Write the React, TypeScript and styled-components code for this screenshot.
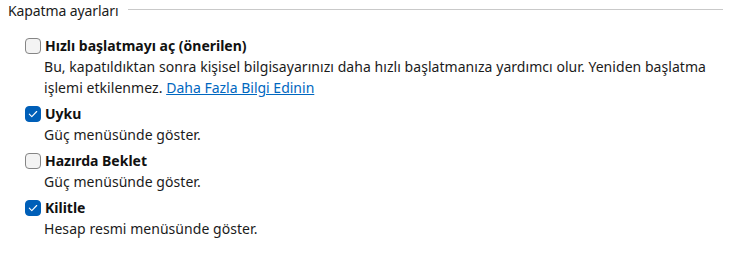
import React from "react";
import styled, { createGlobalStyle } from "styled-components";

const Global = createGlobalStyle`
  html, body { margin: 0; padding: 0; background: #ffffff; }
  body { font-family: "Noto Sans", "Open Sans", sans-serif; color: #1b1b1b; }
`;

const Section = styled.section`
  width: 734px;
  padding: 0 11px 0 8px;
  box-sizing: border-box;
`;

const Header = styled.div`
  display: flex;
  align-items: center;
  gap: 9px;
  height: 22px;
`;

const Title = styled.h2`
  margin: 0;
  font-size: 14px;
  font-weight: 400;
  line-height: 22px;
  white-space: nowrap;
  color: #1b1b1b;
  letter-spacing: -0.1px;
`;

const Rule = styled.div`
  flex: 1;
  height: 1px;
  background: #c9c9c9;
  margin-top: -3px;
`;

const List = styled.div`
  display: flex;
  flex-direction: column;
  gap: 8px;
  padding: 16px 0 0 17px;
`;

const Option = styled.div`
  display: flex;
  flex-direction: column;
`;

const Row = styled.label`
  display: flex;
  align-items: center;
  gap: 4px;
  height: 16px;
`;

const Box = styled.span<{ $checked: boolean }>`
  width: 16px;
  height: 16px;
  box-sizing: border-box;
  border-radius: 4px;
  display: inline-flex;
  align-items: center;
  justify-content: center;
  flex: none;
  background: ${(p) => (p.$checked ? "#005fb8" : "#f3f3f3")};
  border: 1px solid ${(p) => (p.$checked ? "#005fb8" : "#858585")};
`;

const Label = styled.span`
  font-size: 14px;
  line-height: 16px;
  font-weight: 700;
  color: #111111;
`;

const Desc = styled.p`
  margin: 2px 0 0;
  padding-left: 19px;
  font-size: 14px;
  line-height: 21px;
  letter-spacing: 0.05px;
  color: #1b1b1b;
`;

const Link = styled.a`
  color: #0067c0;
  text-decoration: underline;
  letter-spacing: 0;
`;

const Check = () => (
  <svg width="10" height="8" viewBox="0 0 10 8" fill="none">
    <path d="M1.3 4.2 L3.8 6.6 L8.7 1.5" stroke="#ffffff" strokeWidth="1.1" strokeLinecap="round" strokeLinejoin="round" />
  </svg>
);

type Item = { label: string; checked: boolean; desc: React.ReactNode };

const items: Item[] = [
  {
    label: "Hızlı başlatmayı aç (önerilen)",
    checked: false,
    desc: (
      <>
        Bu, kapatıldıktan sonra kişisel bilgisayarınızı daha hızlı başlatmanıza yardımcı olur. Yeniden başlatma işlemi etkilenmez.{" "}
        <Link href="#">Daha Fazla Bilgi Edinin</Link>
      </>
    ),
  },
  { label: "Uyku", checked: true, desc: "Güç menüsünde göster." },
  { label: "Hazırda Beklet", checked: false, desc: "Güç menüsünde göster." },
  { label: "Kilitle", checked: true, desc: "Hesap resmi menüsünde göster." },
];

export default function App() {
  return (
    <>
      <Global />
      <Section>
        <Header>
          <Title>Kapatma ayarları</Title>
          <Rule />
        </Header>
        <List>
          {items.map((it) => (
            <Option key={it.label}>
              <Row>
                <Box $checked={it.checked}>{it.checked && <Check />}</Box>
                <Label>{it.label}</Label>
              </Row>
              <Desc>{it.desc}</Desc>
            </Option>
          ))}
        </List>
      </Section>
    </>
  );
}
